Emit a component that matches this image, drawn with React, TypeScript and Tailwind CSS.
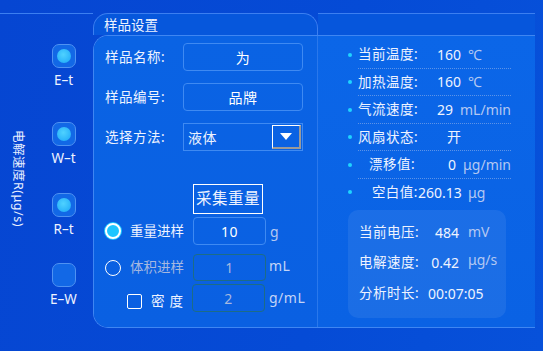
import React from 'react'

const rows = [
  { label: '当前温度:', value: '160', unit: '℃', indent: false },
  { label: '加热温度:', value: '160', unit: '℃', indent: false },
  { label: '气流速度:', value: '29', unit: 'mL/min', indent: false },
  { label: '风扇状态:', value: '开', unit: '', indent: false },
  { label: '漂移值:', value: '0', unit: 'μg/min', indent: true },
  { label: '空白值:', value: '260.13', unit: 'μg', indent: true },
]

function SideButton({ label, on, top }: { label: string; on: boolean; top: string }) {
  return (
    <div className={`flex flex-col items-center ${top}`}>
      <div className="w-[24px] h-[24px] rounded-[7px] border border-[#4f92f2] bg-[#1268e6] flex items-center justify-center">
        {on && <div className="w-[14px] h-[14px] rounded-full bg-[radial-gradient(circle_at_45%_40%,#4fd2ff,#1aa6f8)]" />}
      </div>
      <div className="mt-[5px] text-[13.5px] leading-[15px] text-[#eef3ff]">{label}</div>
    </div>
  )
}

function Field({ text, w = 'w-[120px]' }: { text: string; w?: string }) {
  return (
    <div className={`${w} h-[28px] rounded-[4px] border border-[#3f8af2] flex items-center justify-center text-[14px] text-white`}>
      {text}
    </div>
  )
}

export default function App() {
  return (
    <div className="w-[543px] h-[351px] overflow-hidden flex flex-col bg-[linear-gradient(100deg,#0646d2_0%,#054bd6_60%,#0751da_100%)] font-['Noto_Sans','Noto_Sans_CJK_SC',sans-serif] text-[#eef3ff]">
      <div className="h-[13px] shrink-0" />
      <div className="flex w-[535px] h-[315px] shrink-0">
        {/* 左侧 */}
        <div className="w-[93px] flex border-t border-[#3c7ff0]">
          <div className="w-[34px] flex justify-center pl-[2px] pt-[116px]">
            <div className="[writing-mode:vertical-rl] [text-orientation:sideways] text-[12.5px] leading-[15px] tracking-[0.5px] text-[#e8efff] h-[100px]">
              电解速度R(μg/s)
            </div>
          </div>
          <div className="w-[59px] flex flex-col">
            <SideButton label="E–t" on top="mt-[30px]" />
            <SideButton label="W–t" on top="mt-[34px]" />
            <SideButton label="R–t" on top="mt-[27px]" />
            <SideButton label="E–W" on={false} top="mt-[26px]" />
          </div>
        </div>

        <div className="flex-1 flex flex-col">
          {/* 标题 */}
          <div className="h-[22px] flex">
            <div className="w-[225px] rounded-t-[15px] border-t border-l border-r border-[#3c7ff0] bg-[#0657dc] pl-[10px] pt-[3px] text-[13.5px] leading-[17px]">
              样品设置
            </div>
            <div className="flex-1 border-t border-[#3c7ff0] bg-[#0656dc]" />
          </div>

          <div className="h-[293px] flex rounded-l-[15px] border-t border-b border-l border-[#3f86f2] overflow-hidden">
            {/* 样品设置 */}
            <div className="w-[224px] border-r border-[#2a78ec] bg-[linear-gradient(180deg,#0a63e4,#0a60e2)] pl-[11px] pt-[7px] flex flex-col text-[13.5px] tracking-[0.5px]">
              <div className="flex items-center">
                <div className="w-[78px]">样品名称:</div>
                <Field text="为" />
              </div>
              <div className="flex items-center mt-[12px]">
                <div className="w-[78px]">样品编号:</div>
                <Field text="品牌" />
              </div>
              <div className="flex items-center mt-[12px]">
                <div className="w-[78px]">选择方法:</div>
                <div className="w-[120px] h-[28px] border border-[#3f8af2] flex items-center justify-between pl-[4px] pr-[1px]">
                  <span className="text-[14px]">液体</span>
                  <div className="w-[29px] h-[24px] border border-white border-r-2 border-b-2 border-r-[#9a9a9a] border-b-[#9a9a9a] flex items-center justify-center">
                    <svg width="12" height="7" viewBox="0 0 12 7">
                      <path d="M0 0h12L6 7z" fill="#fff" />
                    </svg>
                  </div>
                </div>
              </div>
              <div className="ml-[88px] mt-[33px] w-[70px] h-[30px] border border-white flex items-center justify-center text-[15.5px] tracking-[0.5px]">
                采集重量
              </div>
              <div className="flex items-center mt-[3px]">
                <div className="w-[16px] h-[16px] rounded-full border-2 border-white bg-[#1ec6ff] shadow-[0_0_0_1px_#1ec6ff]" />
                <div className="ml-[9px] w-[63px] tracking-normal">重量进样</div>
                <Field text="10" w="w-[73px]" />
                <div className="ml-[4px] text-[14px] text-[#b4c8f2]">g</div>
              </div>
              <div className="flex items-center mt-[9px]">
                <div className="w-[16px] h-[16px] rounded-full border-[1.5px] border-white" />
                <div className="ml-[9px] w-[63px] tracking-normal text-[#a6b8e0]">体积进样</div>
                <div className="w-[73px] h-[27px] rounded-[4px] border border-[#1d6c86] flex items-center justify-center text-[14px] text-[#a6b8e0]">
                  1
                </div>
                <div className="ml-[3px] text-[14px] text-[#c4d4f6] -mt-[4px]">mL</div>
              </div>
              <div className="flex items-center mt-[3px]">
                <div className="ml-[22px] mt-[6px] w-[15px] h-[15px] rounded-[2px] border-[1.5px] border-white" />
                <div className="ml-[9px] w-[41px] tracking-[5px] mt-[6px]">密度</div>
                <div className="w-[73px] h-[28px] rounded-[4px] border border-[#1d6c86] flex items-center justify-center text-[14px] text-[#a6b8e0]">
                  2
                </div>
                <div className="ml-[4px] text-[14px] text-[#c4d4f6] -mt-[2px]">g/mL</div>
              </div>
            </div>

            {/* 状态 */}
            <div className="flex-1 bg-[linear-gradient(180deg,#0b66e8,#0a62e4)] pl-[30px] pt-[5px] flex flex-col">
              {rows.map((r, i) => (
                <div key={r.label} className="flex items-center h-[27.5px]">
                  <div className="w-[4px] h-[4px] rounded-full bg-[#1fd4ff]" />
                  <div
                    className={`ml-[6px] w-[153px] h-full flex items-center ${
                      i < rows.length - 1 ? 'border-b border-dotted border-[#5c93e8]' : ''
                    }`}
                  >
                    <div className={`w-[60px] text-[13.5px] tracking-[0.5px] whitespace-nowrap ${r.indent ? 'text-right' : ''}`}>{r.label}</div>
                    <div className="w-[43px] text-right text-[14px] whitespace-nowrap">{r.value}</div>
                    <div className="ml-[7px] text-[14px] text-[#b4c8f2] whitespace-nowrap">{r.unit}</div>
                  </div>
                </div>
              ))}
              <div className="mt-[4px] w-[158px] h-[108px] rounded-[10px] bg-[#ffffff12] pl-[11px] pt-[11px] flex flex-col text-[13.5px] tracking-[0.5px]">
                <div className="flex items-center h-[22px]">
                  <div className="w-[62px]">当前电压:</div>
                  <div className="w-[38px] text-right text-[14px] tracking-normal">484</div>
                  <div className="ml-[9px] text-[14px] tracking-normal text-[#b4c8f2] -mt-[2px]">mV</div>
                </div>
                <div className="flex items-center h-[22px] mt-[8px]">
                  <div className="w-[62px]">电解速度:</div>
                  <div className="w-[38px] text-right text-[14px] tracking-normal">0.42</div>
                  <div className="ml-[9px] text-[14px] tracking-normal text-[#b4c8f2] -mt-[6px]">μg/s</div>
                </div>
                <div className="flex items-center h-[22px] mt-[9px]">
                  <div className="w-[62px]">分析时长:</div>
                  <div className="ml-[7px] text-[14px] tracking-normal">00:07:05</div>
                </div>
              </div>
            </div>
          </div>
        </div>
      </div>
    </div>
  )
}
